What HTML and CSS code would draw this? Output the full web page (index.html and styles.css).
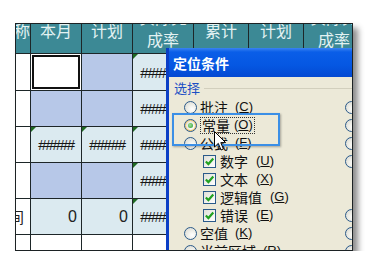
FILE: index.html
```html
<!DOCTYPE html>
<html lang="en">
<head>
<meta charset="UTF-8">
<title>定位条件</title>
<link rel="stylesheet" href="styles.css">
</head>
<body>
    <div class="shot">
        <div class="sheet">
            <div class="hd end">名称</div>
            <div class="hd">本月</div>
            <div class="hd">计划</div>
            <div class="hd two"><span>实际完<br>成率</span></div>
            <div class="hd">累计</div>
            <div class="hd">计划</div>
            <div class="hd two"><span>实际完<br>成率</span></div>

            <div class="cell w"></div>
            <div class="cell w sel"></div>
            <div class="cell b"></div>
            <div class="cell t hash tri">######</div>
            <div class="cell t"></div>
            <div class="cell t"></div>
            <div class="cell t"></div>

            <div class="cell w"></div>
            <div class="cell b"></div>
            <div class="cell b"></div>
            <div class="cell t hash">######</div>
            <div class="cell t"></div>
            <div class="cell t"></div>
            <div class="cell t"></div>

            <div class="cell w"></div>
            <div class="cell t hash tri">#####</div>
            <div class="cell t hash tri">#####</div>
            <div class="cell t hash tri">######</div>
            <div class="cell t"></div>
            <div class="cell t"></div>
            <div class="cell t"></div>

            <div class="cell w"></div>
            <div class="cell b"></div>
            <div class="cell b"></div>
            <div class="cell t hash tri">######</div>
            <div class="cell t"></div>
            <div class="cell t"></div>
            <div class="cell t"></div>

            <div class="cell w txt">期间</div>
            <div class="cell t num">0</div>
            <div class="cell t num">0</div>
            <div class="cell t hash tri">######</div>
            <div class="cell t"></div>
            <div class="cell t"></div>
            <div class="cell t"></div>

            <div class="cell w"></div>
            <div class="cell w"></div>
            <div class="cell w"></div>
            <div class="cell w"></div>
            <div class="cell w"></div>
            <div class="cell w"></div>
            <div class="cell w"></div>
        </div>

        <!-- the dialog window over the sheet -->
        <div class="dialog">
            <div class="title">定位条件</div>
            <div class="body">
                <div class="group">选择</div>
                <div class="opts">
                    <div class="opt"><span class="radio"></span>批注<span class="key">(<u>C</u>)</span></div>
                    <span class="radio"></span>
                    <div class="opt"><span class="radio on"></span><span class="focus">常量<span class="key">(<u>O</u>)</span></span></div>
                    <span class="radio"></span>
                    <div class="opt"><span class="radio"></span>公式<span class="key">(<u>F</u>)</span></div>
                    <span class="radio"></span>
                    <div class="opt sub"><span class="check"><svg viewBox="0 0 9 9"><path d="M1.5 4.5 L3.6 6.6 L7.6 2" /></svg></span>数字<span class="key">(<u>U</u>)</span></div>
                    <span class="radio"></span>
                    <div class="opt sub"><span class="check"><svg viewBox="0 0 9 9"><path d="M1.5 4.5 L3.6 6.6 L7.6 2" /></svg></span>文本<span class="key">(<u>X</u>)</span></div>
                    <span></span>
                    <div class="opt sub"><span class="check"><svg viewBox="0 0 9 9"><path d="M1.5 4.5 L3.6 6.6 L7.6 2" /></svg></span>逻辑值<span class="key">(<u>G</u>)</span></div>
                    <span></span>
                    <div class="opt sub"><span class="check"><svg viewBox="0 0 9 9"><path d="M1.5 4.5 L3.6 6.6 L7.6 2" /></svg></span>错误<span class="key">(<u>E</u>)</span></div>
                    <span class="radio"></span>
                    <div class="opt"><span class="radio"></span>空值<span class="key">(<u>K</u>)</span></div>
                    <span class="radio"></span>
                    <div class="opt"><span class="radio"></span>当前区域<span class="key">(<u>R</u>)</span></div>
                    <span class="radio"></span>
                </div>
            </div>
        </div>

        <div class="mark"></div>
        <svg class="cursor" width="13" height="21" viewBox="0 0 13 21">
            <path d="M0.5 0.5 L0.5 16 L4.3 12.4 L7 19 L9.4 18 L6.8 11.6 L11.6 11.6 Z" />
        </svg>
    </div>
</body>
</html>
```

FILE: styles.css
```css
body {
    margin: 0;
    background-color: #fff;
    font-family: "Noto Sans CJK SC", "Liberation Sans", sans-serif;
}

.shot {
    position: relative;
    width: 336px;
    height: 226px;
    margin: 23px 0 0 15px;
    border: 1px solid #1c2224;
    overflow: hidden;
    box-shadow: 5px 5px 6px rgba(0, 0, 0, 0.45);
}

.sheet {
    display: grid;
    grid-template-columns: 14px 50px 50px 60px 54px 54px 60px;
    grid-template-rows: 29px 36px 35px 35px 35px 35px 15px;
    gap: 1px;
    width: 348px;
    background-color: #1d2628;
}

.hd {
    display: flex;
    justify-content: center;
    align-items: flex-start;
    overflow: hidden;
    white-space: nowrap;
    background-color: #3c8995;
    color: #e3f2f2;
    font-size: 16px;
    line-height: 12px;
}

.hd.end {
    justify-content: flex-end;
}

.hd.two {
    line-height: 22px;
    text-align: center;
}

.hd.two span {
    margin-top: -18px;
}

.cell {
    position: relative;
    display: flex;
    align-items: center;
    overflow: hidden;
    white-space: nowrap;
}

.w { background-color: #fff; }
.b { background-color: #b7c8e8; }
.t { background-color: #dbeaf0; }

.sel {
    box-shadow: inset 0 0 0 1px #fff, inset 0 0 0 3px #111;
}

.tri::before {
    content: "";
    position: absolute;
    top: 0;
    left: 0;
    border-top: 5px solid #1f6a22;
    border-right: 5px solid transparent;
}

.hash {
    padding-left: 7px;
    font-family: "Liberation Sans", sans-serif;
    font-style: italic;
    font-size: 15px;
    letter-spacing: -1.2px;
    color: #151515;
}

.num {
    justify-content: flex-end;
    padding-right: 4px;
    font-family: "Liberation Sans", sans-serif;
    font-size: 16px;
    color: #222;
}

.txt {
    justify-content: flex-end;
    padding-right: 6px;
    font-size: 15px;
    color: #222;
}

/* dialog */
.dialog {
    position: absolute;
    left: 150px;
    top: 24px;
    width: 230px;
    height: 230px;
    border-left: 3px solid #0b3fc6;
    background-color: #ece9d8;
}

.title {
    height: 29px;
    padding-left: 4px;
    box-sizing: border-box;
    display: flex;
    align-items: center;
    background: linear-gradient(#3a83f2 0, #0a5ee8 4px, #0557e2 60%, #0449d2 100%);
    color: #fff;
    font-size: 14px;
    font-weight: bold;
}

.body {
    padding: 4px 0 0 15px;
    font-size: 14px;
    line-height: 16px;
    color: #111;
}

.group {
    display: flex;
    align-items: center;
    gap: 4px;
    margin-left: -10px;
    height: 14px;
    font-size: 13px;
    line-height: 14px;
    color: #1c4fc4;
}

.group::after {
    content: "";
    flex: 1;
    height: 1px;
    background-color: #d2cfbd;
}

.opts {
    display: grid;
    grid-template-columns: 161px 20px;
    grid-auto-rows: 18px;
    align-items: center;
    margin-top: 3px;
}

.opt {
    display: flex;
    align-items: center;
    gap: 3px;
    height: 18px;
    white-space: nowrap;
}

.opt.sub {
    padding-left: 19px;
    gap: 4px;
}

.key {
    margin-left: 4px;
    font-family: "Liberation Sans", sans-serif;
    font-size: 13px;
    letter-spacing: 0;
}

.radio {
    position: relative;
    width: 11px;
    height: 11px;
    border: 1px solid #2a5a8a;
    border-radius: 50%;
    background: radial-gradient(circle at 65% 65%, #fff 0, #f0f0ea 40%, #d4d4cc 100%);
}

.radio.on {
    box-shadow: inset 0 0 0 1px #f6c86a;
}

.radio.on::after {
    content: "";
    position: absolute;
    left: 3px;
    top: 3px;
    width: 5px;
    height: 5px;
    border-radius: 50%;
    background: radial-gradient(circle at 40% 40%, #9ee29a, #2b9a2b);
}

.check {
    display: flex;
    width: 11px;
    height: 11px;
    border: 1px solid #2a5a8a;
    background: linear-gradient(135deg, #e0e0d8, #fff);
}

.check svg {
    width: 11px;
    height: 11px;
    fill: none;
    stroke: #21a121;
    stroke-width: 1.8;
}

.focus {
    display: flex;
    align-items: center;
    height: 15px;
    padding: 0 1px;
    border: 1px dotted #333;
}

.mark {
    position: absolute;
    left: 156px;
    top: 89px;
    width: 104px;
    height: 29px;
    border: 2px solid #3b8fe6;
    box-shadow: 1px 1px 2px rgba(0, 0, 0, 0.3);
}

.cursor {
    position: absolute;
    left: 198px;
    top: 107px;
}

.cursor path {
    fill: #fff;
    stroke: #000;
    stroke-width: 1;
}
```
